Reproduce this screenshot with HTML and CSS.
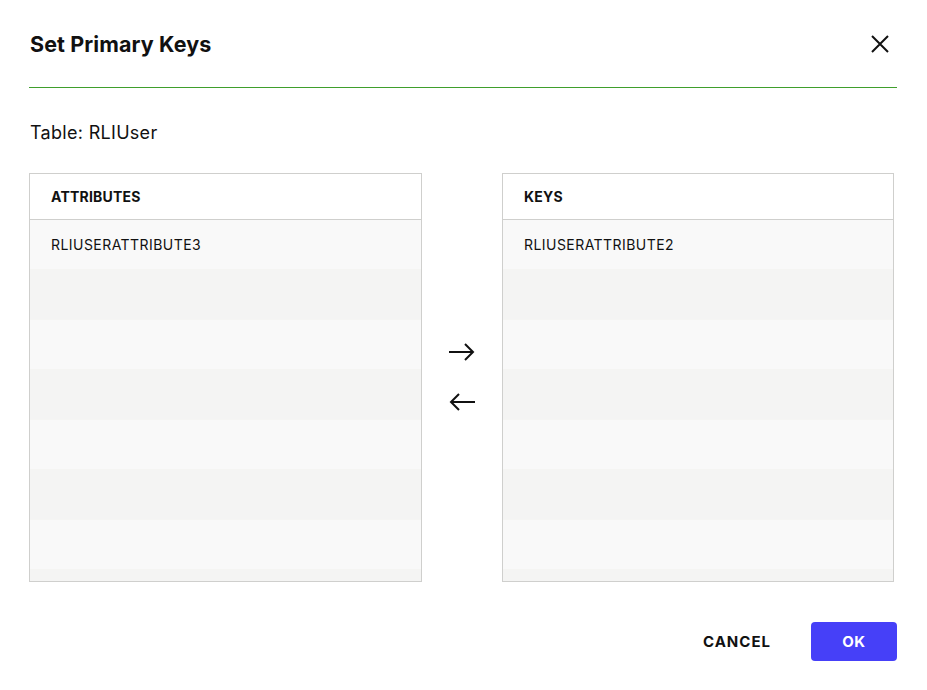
FILE: index.html
```html
<!DOCTYPE html>
<html>
<head>
<meta charset="utf-8">
<link rel="stylesheet" href="styles.css">
</head>
<body>
<div class="dialog">
  <div class="header">
    <h1 class="title">Set Primary Keys</h1>
    <button class="close" aria-label="Close">
      <svg width="20" height="20" viewBox="0 0 20 20"><path d="M2 2 L18 18 M18 2 L2 18" stroke="#111" stroke-width="2" fill="none"/></svg>
    </button>
  </div>
  <div class="table-label">Table: RLIUser</div>
  <div class="lists">
    <div class="panel">
      <div class="panel-head">ATTRIBUTES</div>
      <div class="panel-body">
        <div class="row">RLIUSERATTRIBUTE3</div>
        <div class="row"></div><div class="row"></div><div class="row"></div>
        <div class="row"></div><div class="row"></div><div class="row"></div><div class="row"></div>
      </div>
    </div>
    <div class="arrows">
      <button class="arrow" aria-label="Add">
        <svg width="28" height="20" viewBox="0 0 28 20"><path d="M1 10 H25 M17 2 L25 10 L17 18" stroke="#111" stroke-width="2" fill="none"/></svg>
      </button>
      <button class="arrow" aria-label="Remove">
        <svg width="28" height="20" viewBox="0 0 28 20"><path d="M27 10 H3 M11 2 L3 10 L11 18" stroke="#111" stroke-width="2" fill="none"/></svg>
      </button>
    </div>
    <div class="panel">
      <div class="panel-head">KEYS</div>
      <div class="panel-body">
        <div class="row">RLIUSERATTRIBUTE2</div>
        <div class="row"></div><div class="row"></div><div class="row"></div>
        <div class="row"></div><div class="row"></div><div class="row"></div><div class="row"></div>
      </div>
    </div>
  </div>
  <div class="footer">
    <button class="btn-cancel">CANCEL</button>
    <button class="btn-ok">OK</button>
  </div>
</div>
</body>
</html>
```
FILE: styles.css
```css
* { box-sizing: border-box; }
html, body { margin: 0; padding: 0; background: #fff; }
body { font-family: Inter, "Noto Sans", sans-serif; color: #111; }
.dialog { width: 927px; padding: 0 30px 0 29px; }
.header {
  height: 88px;
  display: flex;
  align-items: center;
  justify-content: space-between;
  border-bottom: 1px solid #3f9f2c;
  padding-left: 1px;
}
.title { margin: 0; font-size: 21.5px; font-weight: 700; letter-spacing: 0.1px; }
.close { background: none; border: 0; padding: 0; margin-right: 7px; width: 20px; height: 20px; cursor: pointer; }
.close svg { display: block; }
.table-label { margin-top: 33px; font-size: 18px; line-height: 24px; height: 24px; letter-spacing: 0.3px; padding-left: 1px; }
.lists { margin-top: 28px; display: flex; align-items: stretch; }
.panel {
  width: 393px;
  height: 409px;
  border: 1px solid #cfcfcd;
  display: flex;
  flex-direction: column;
  overflow: hidden;
}
.panel:last-child { width: 392px; }
.panel-head {
  height: 46px;
  flex: none;
  border-bottom: 1px solid #cfcfcd;
  padding-left: 21px;
  display: flex;
  align-items: center;
  font-size: 14px;
  font-weight: 700;
  letter-spacing: 0.2px;
}
.panel-body { flex: 1; overflow: hidden; }
.row {
  height: 50px;
  padding-left: 21px;
  display: flex;
  align-items: center;
  font-size: 14px;
  letter-spacing: 0.45px;
  background: #f9f9f9;
  border-bottom: 1px solid #f5f5f3;
}
.row:nth-child(even) { background: #f4f4f3; }
.arrows {
  width: 80px;
  display: flex;
  flex-direction: column;
  align-items: center;
  justify-content: flex-start;
  padding-top: 169px;
  gap: 30px;
}
.arrow { background: none; border: 0; padding: 0; width: 28px; height: 20px; cursor: pointer; }
.arrow svg { display: block; }
.footer {
  margin-top: 40px;
  display: flex;
  justify-content: flex-end;
  align-items: center;
  gap: 40px;
}
.btn-cancel {
  background: none; border: 0; padding: 0;
  font-family: Inter, "Noto Sans", sans-serif;
  font-size: 15px; font-weight: 700; letter-spacing: 1px; color: #111;
}
.btn-ok {
  width: 86px; height: 39px;
  background: #4640f8; color: #fff; border: 0; border-radius: 4px;
  font-family: Inter, "Noto Sans", sans-serif;
  font-size: 15px; font-weight: 700; letter-spacing: 0.5px;
}
```
